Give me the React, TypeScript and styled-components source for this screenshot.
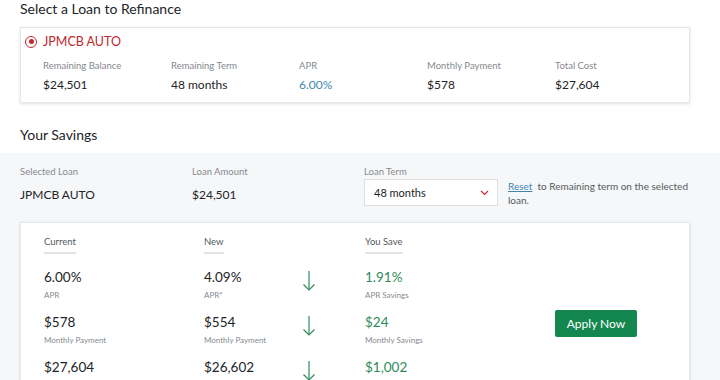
import React, { FunctionComponent } from 'react';
import styled, { createGlobalStyle } from 'styled-components';

const GlobalStyle = createGlobalStyle`
  html, body {
    margin: 0;
    padding: 0;
    background: #ffffff;
    font-family: "Lato", "Open Sans", sans-serif;
    color: #222426;
  }
`;

const Page = styled.div`
  width: 720px;
  height: 380px;
  overflow: hidden;
`;

const SectionTitle = styled.h2<{ top?: number }>`
  margin: 0;
  padding: ${({ top }) => top ?? 0}px 20px 0;
  font-size: 14px;
  font-weight: 400;
  line-height: 18px;
  color: #222426;
`;

const LoanCard = styled.div`
  margin: 9px 30px 0 20px;
  background: #fff;
  border: 1px solid #e6e7e9;
  box-shadow: 0 1px 3px rgba(0, 0, 0, 0.12);
  padding: 5px 22px 9px;
`;

const LoanName = styled.div`
  display: flex;
  align-items: center;
  gap: 6px;
  margin-left: -18px;
  height: 17px;
  font-size: 12.5px;
  color: #c4262e;
`;

const Radio = styled.span`
  width: 12px;
  height: 12px;
  border: 1.5px solid #c4262e;
  border-radius: 50%;
  box-sizing: border-box;
  display: flex;
  align-items: center;
  justify-content: center;
  &::after {
    content: '';
    width: 5px;
    height: 5px;
    border-radius: 50%;
    background: #c4262e;
  }
`;

const LoanGrid = styled.div`
  display: grid;
  grid-template-columns: repeat(5, 128px);
  margin-top: 10px;
`;

const Field = styled.div`
  display: flex;
  flex-direction: column;
`;

const SmallLabel = styled.span<{ size?: number; gap?: number }>`
  margin-top: ${({ gap }) => gap ?? 0}px;
  font-size: ${({ size }) => size ?? 9.5}px;
  line-height: 12px;
  color: #868a8f;
`;

const Value = styled.span<{ tone?: 'blue' | 'green'; size?: number; gap?: number }>`
  margin-top: ${({ gap }) => gap ?? 5}px;
  font-size: ${({ size }) => size ?? 12}px;
  line-height: 16px;
  color: ${({ tone }) => (tone === 'blue' ? '#3f87b0' : tone === 'green' ? '#2f8a5a' : '#222426')};
`;

const SavingsArea = styled.div`
  margin-top: 9px;
  background: #f6f7f9;
  padding: 13px 20px 0;
`;

const TermGrid = styled.div`
  display: grid;
  grid-template-columns: 172px 172px 144px 1fr;
`;

const TermBlock = styled.div`
  display: flex;
  flex-direction: column;
`;

const Select = styled.div`
  margin-top: 1px;
  width: 134px;
  height: 27px;
  box-sizing: border-box;
  border: 1px solid #dcdee1;
  background: #fff;
  display: flex;
  align-items: center;
  justify-content: space-between;
  padding: 0 8px 0 9px;
  font-size: 11px;
  color: #222426;
`;

const ResetNote = styled.p`
  margin: 13px 0 0;
  font-size: 10px;
  line-height: 14px;
  color: #55595e;
`;

const ResetLink = styled.a`
  color: #3f87b0;
  text-decoration: underline;
`;

const SavingsCard = styled.div`
  margin: 15px 10px 0 0;
  background: #fff;
  border: 1px solid #e6e7e9;
  box-shadow: 0 1px 3px rgba(0, 0, 0, 0.12);
  padding: 12px 23px 20px;
  display: grid;
  grid-template-columns: 160px 98px 63px 190px 1fr;
`;

const ColumnHead = styled.div<{ col: number }>`
  grid-column: ${({ col }) => col};
  justify-self: start;
  font-size: 9.5px;
  line-height: 13px;
  color: #55595e;
  padding-bottom: 4px;
  border-bottom: 2px solid #e2e3e5;
  margin-bottom: 15px;
`;

const Cell = styled.div<{ col: number }>`
  grid-column: ${({ col }) => col};
  display: flex;
  flex-direction: column;
  height: 44px;
`;

const ArrowCell = styled.div`
  grid-column: 3;
  height: 44px;
  padding-top: 1px;
`;

const ApplyButton = styled.button`
  grid-column: 5;
  align-self: start;
  justify-self: start;
  margin-top: -4px;
  width: 82px;
  height: 27px;
  border: none;
  border-radius: 2px;
  background: #13874f;
  color: #fff;
  font-family: "Lato", "Open Sans", sans-serif;
  font-size: 12px;
  cursor: pointer;
`;

const DownArrow: FunctionComponent = () => (
  <svg width="14" height="22" viewBox="0 0 14 22" fill="none" stroke="#2f8a5a" strokeWidth="1.2">
    <path d="M7 1v19" />
    <path d="M1.5 14.5L7 20l5.5-5.5" />
  </svg>
);

const Chevron: FunctionComponent = () => (
  <svg width="9" height="6" viewBox="0 0 9 6" fill="none" stroke="#c4262e" strokeWidth="1.1">
    <path d="M1 1l3.5 3.5L8 1" />
  </svg>
);

const loanFields = [
  { label: 'Remaining Balance', value: '$24,501' },
  { label: 'Remaining Term', value: '48 months' },
  { label: 'APR', value: '6.00%', tone: 'blue' as const },
  { label: 'Monthly Payment', value: '$578' },
  { label: 'Total Cost', value: '$27,604' },
];

// the last row's captions fall below the visible area, so they are left out
const savingsRows = [
  { current: '6.00%', newVal: '4.09%', save: '1.91%', label: 'APR', newLabel: 'APR*', saveLabel: 'APR Savings' },
  { current: '$578', newVal: '$554', save: '$24', label: 'Monthly Payment', newLabel: 'Monthly Payment', saveLabel: 'Monthly Savings' },
  { current: '$27,604', newVal: '$26,602', save: '$1,002', label: '', newLabel: '', saveLabel: '' },
];

const App: FunctionComponent = () => {
  return (
    <Page>
      <GlobalStyle />
      <SectionTitle>Select a Loan to Refinance</SectionTitle>
      <LoanCard>
        <LoanName>
          <Radio />
          JPMCB AUTO
        </LoanName>
        <LoanGrid>
          {loanFields.map((f) => (
            <Field key={f.label}>
              <SmallLabel>{f.label}</SmallLabel>
              <Value tone={f.tone}>{f.value}</Value>
            </Field>
          ))}
        </LoanGrid>
      </LoanCard>

      <SectionTitle top={23}>Your Savings</SectionTitle>
      <SavingsArea>
        <TermGrid>
          <TermBlock>
            <SmallLabel>Selected Loan</SmallLabel>
            <Value gap={9}>JPMCB AUTO</Value>
          </TermBlock>
          <TermBlock>
            <SmallLabel>Loan Amount</SmallLabel>
            <Value gap={9}>$24,501</Value>
          </TermBlock>
          <TermBlock>
            <SmallLabel>Loan Term</SmallLabel>
            <Select>
              48 months
              <Chevron />
            </Select>
          </TermBlock>
          <ResetNote>
            <ResetLink>Reset</ResetLink>&nbsp; to Remaining term on the selected
            <br />
            loan.
          </ResetNote>
        </TermGrid>

        <SavingsCard>
          <ColumnHead col={1}>Current</ColumnHead>
          <ColumnHead col={2}>New</ColumnHead>
          <ColumnHead col={4}>You Save</ColumnHead>
          {savingsRows.map((r, i) => (
            <React.Fragment key={r.current}>
              <Cell col={1}>
                <Value size={13.5} gap={0}>{r.current}</Value>
                {r.label && <SmallLabel size={8} gap={4}>{r.label}</SmallLabel>}
              </Cell>
              <Cell col={2}>
                <Value size={13.5} gap={0}>{r.newVal}</Value>
                {r.newLabel && <SmallLabel size={8} gap={4}>{r.newLabel}</SmallLabel>}
              </Cell>
              <ArrowCell>
                <DownArrow />
              </ArrowCell>
              <Cell col={4}>
                <Value size={13.5} gap={0} tone="green">{r.save}</Value>
                {r.saveLabel && <SmallLabel size={8} gap={4}>{r.saveLabel}</SmallLabel>}
              </Cell>
              {i === 1 ? <ApplyButton>Apply Now</ApplyButton> : <div />}
            </React.Fragment>
          ))}
        </SavingsCard>
      </SavingsArea>
    </Page>
  );
};

export default App;
